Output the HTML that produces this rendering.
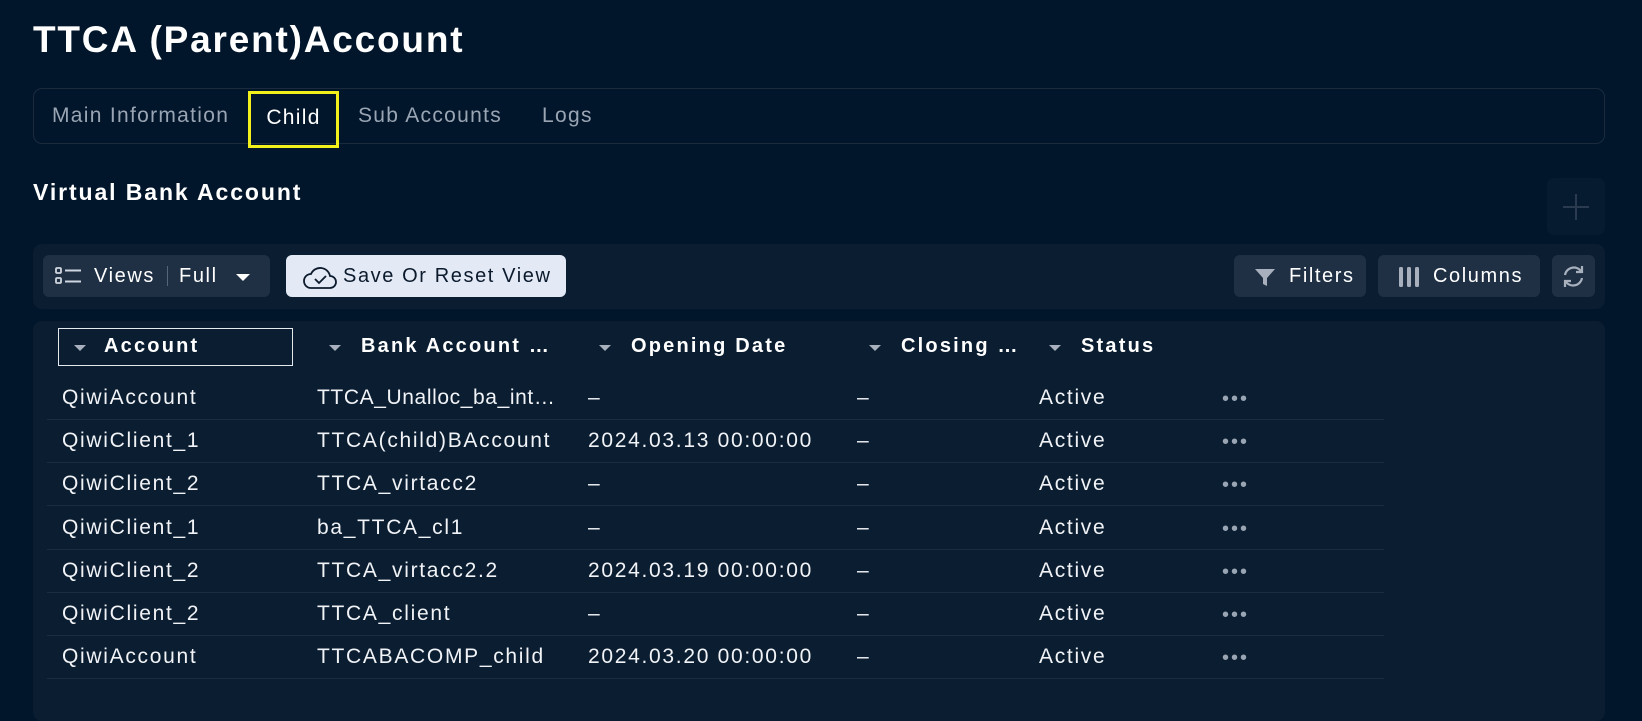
<!DOCTYPE html>
<html><head><meta charset="utf-8"><style>
*{box-sizing:border-box;margin:0;padding:0}
body{width:1642px;height:710px;background:#02162b;font-family:"Liberation Sans",sans-serif;color:#fff;position:relative;overflow:hidden}
.a{position:absolute}
.title{left:33px;top:19px;font-size:37px;font-weight:bold;letter-spacing:1.8px}
.tabs{left:33px;top:88px;width:1572px;height:56px;border:1px solid #1b2b3e;border-radius:9px}
.tab{top:104px;font-size:21px;color:#9aa5b4;letter-spacing:1.3px}
.child{left:248px;top:91px;width:91px;height:57px;border:3px solid #f2f01a;font-size:21px;color:#fff;text-align:center;line-height:48px;letter-spacing:1.3px}
.h2{left:33px;top:179px;font-size:23px;font-weight:bold;letter-spacing:1.9px}
.plus{left:1547px;top:178px;width:58px;height:57px;background:#061b30;border-radius:7px}
.bar{left:33px;top:244px;width:1572px;height:65px;background:#0a1d31;border-radius:9px}
.btn{top:255px;height:42px;background:#1f3045;border-radius:6px;font-size:20px;line-height:42px;color:#fff;letter-spacing:1.6px}
.tbl{left:33px;top:321px;width:1572px;height:400px;background:#0a1d31;border-radius:9px}
.hd{top:335px;font-size:20px;font-weight:bold;letter-spacing:2.2px}
.arr{width:0;height:0;border-left:6px solid transparent;border-right:6px solid transparent;border-top:6px solid #a7b0bc}
.cell{font-size:21px;color:#f1f3f6;letter-spacing:1.7px}
.line{left:47px;width:1337px;height:1px;background:#1c2d40}
.dots{font-size:20px;color:#9aa5b4;letter-spacing:2px}
</style></head><body>
<div class="a title">TTCA (Parent)Account</div>
<div class="a tabs"></div>
<div class="a tab" style="left:52px">Main Information</div>
<div class="a child">Child</div>
<div class="a tab" style="left:358px">Sub Accounts</div>
<div class="a tab" style="left:542px">Logs</div>
<div class="a h2">Virtual Bank Account</div>
<div class="a plus"><svg width="58" height="57"><path d="M29 16v26M16 29h26" stroke="#2a3b50" stroke-width="2"/></svg></div>
<div class="a bar"></div>
<div class="a btn" style="left:43px;width:227px">
<svg class="a" style="left:12px;top:11px" width="28" height="20"><rect x="1" y="2" width="5" height="5" rx="1" fill="none" stroke="#cfd6df" stroke-width="1.8"/><rect x="1" y="12" width="5" height="5" rx="1" fill="none" stroke="#cfd6df" stroke-width="1.8"/><path d="M10 4.5h16M10 15.5h16" stroke="#cfd6df" stroke-width="2"/></svg>
<span class="a" style="left:51px">Views</span><span class="a" style="left:124px;top:11px;width:1px;height:20px;background:#55657a"></span><span class="a" style="left:136px">Full</span>
<div class="a arr" style="left:193px;top:19px;border-top-color:#fff;border-width:7px 7px 0 7px"></div></div>
<div class="a btn" style="left:286px;width:280px;background:#e3e9f5;color:#0b1a2c">
<svg class="a" style="left:16px;top:8px" width="36" height="28"><path d="M9 25h19a6 6 0 0 0 0-12 10 10 0 0 0-19-2 7 7 0 0 0 0 14z" fill="none" stroke="#0b1a2c" stroke-width="1.8"/><path d="M13 16l4 4 7-7" fill="none" stroke="#0b1a2c" stroke-width="1.8"/></svg>
<span class="a" style="left:57px">Save Or Reset View</span></div>
<div class="a btn" style="left:1234px;width:132px"><svg class="a" style="left:20px;top:12px" width="22" height="20"><path d="M1 2h20l-8 9v8l-4-2v-6z" fill="#a7b0bc"/></svg><span class="a" style="left:55px">Filters</span></div>
<div class="a btn" style="left:1378px;width:162px"><svg class="a" style="left:20px;top:11px" width="22" height="22"><rect x="1" y="1" width="4" height="20" rx="1.5" fill="#a7b0bc"/><rect x="9" y="1" width="4" height="20" rx="1.5" fill="#a7b0bc"/><rect x="17" y="1" width="4" height="20" rx="1.5" fill="#a7b0bc"/></svg><span class="a" style="left:55px">Columns</span></div>
<div class="a btn" style="left:1552px;width:43px"><svg class="a" style="left:9px;top:9px" width="25" height="25"><path d="M4 11a9 9 0 0 1 16-4M21 14a9 9 0 0 1-16 4" fill="none" stroke="#a7b0bc" stroke-width="2.2"/><path d="M21 2v6h-6M4 23v-6h6" fill="none" stroke="#a7b0bc" stroke-width="2.2"/></svg></div>
<div class="a tbl"></div>
<div class="a" style="left:58px;top:328px;width:235px;height:38px;border:1px solid #e6e9ee"></div>
<div class="a arr" style="left:74px;top:345px"></div><div class="a hd" style="left:104px">Account</div>
<div class="a arr" style="left:329px;top:345px"></div><div class="a hd" style="left:361px">Bank Account …</div>
<div class="a arr" style="left:599px;top:345px"></div><div class="a hd" style="left:631px">Opening Date</div>
<div class="a arr" style="left:869px;top:345px"></div><div class="a hd" style="left:901px">Closing …</div>
<div class="a arr" style="left:1049px;top:345px"></div><div class="a hd" style="left:1081px">Status</div>
<div id="rows"></div>
<script>
var d=[["QiwiAccount","<span style='letter-spacing:0.6px'>TTCA_Unalloc_ba_int…</span>","–"],["QiwiClient_1","TTCA(child)BAccount","2024.03.13 00:00:00"],["QiwiClient_2","TTCA_virtacc2","–"],["QiwiClient_1","ba_TTCA_cl1","–"],["QiwiClient_2","TTCA_virtacc2.2","2024.03.19 00:00:00"],["QiwiClient_2","TTCA_client","–"],["QiwiAccount","TTCABACOMP_child","2024.03.20 00:00:00"]];
var h="";d.forEach(function(r,i){var y=386+i*43.2;
h+='<div class="a cell" style="left:62px;top:'+y+'px">'+r[0]+'</div><div class="a cell" style="left:317px;top:'+y+'px">'+r[1]+'</div><div class="a cell" style="left:588px;top:'+y+'px">'+r[2]+'</div><div class="a cell" style="left:857px;top:'+y+'px">–</div><div class="a cell" style="left:1039px;top:'+y+'px">Active</div><div class="a dots" style="left:1222px;top:'+(y+2)+'px">•••</div><div class="a line" style="top:'+(y+33)+'px"></div>';});
document.getElementById("rows").innerHTML=h;
</script>
</body></html>
